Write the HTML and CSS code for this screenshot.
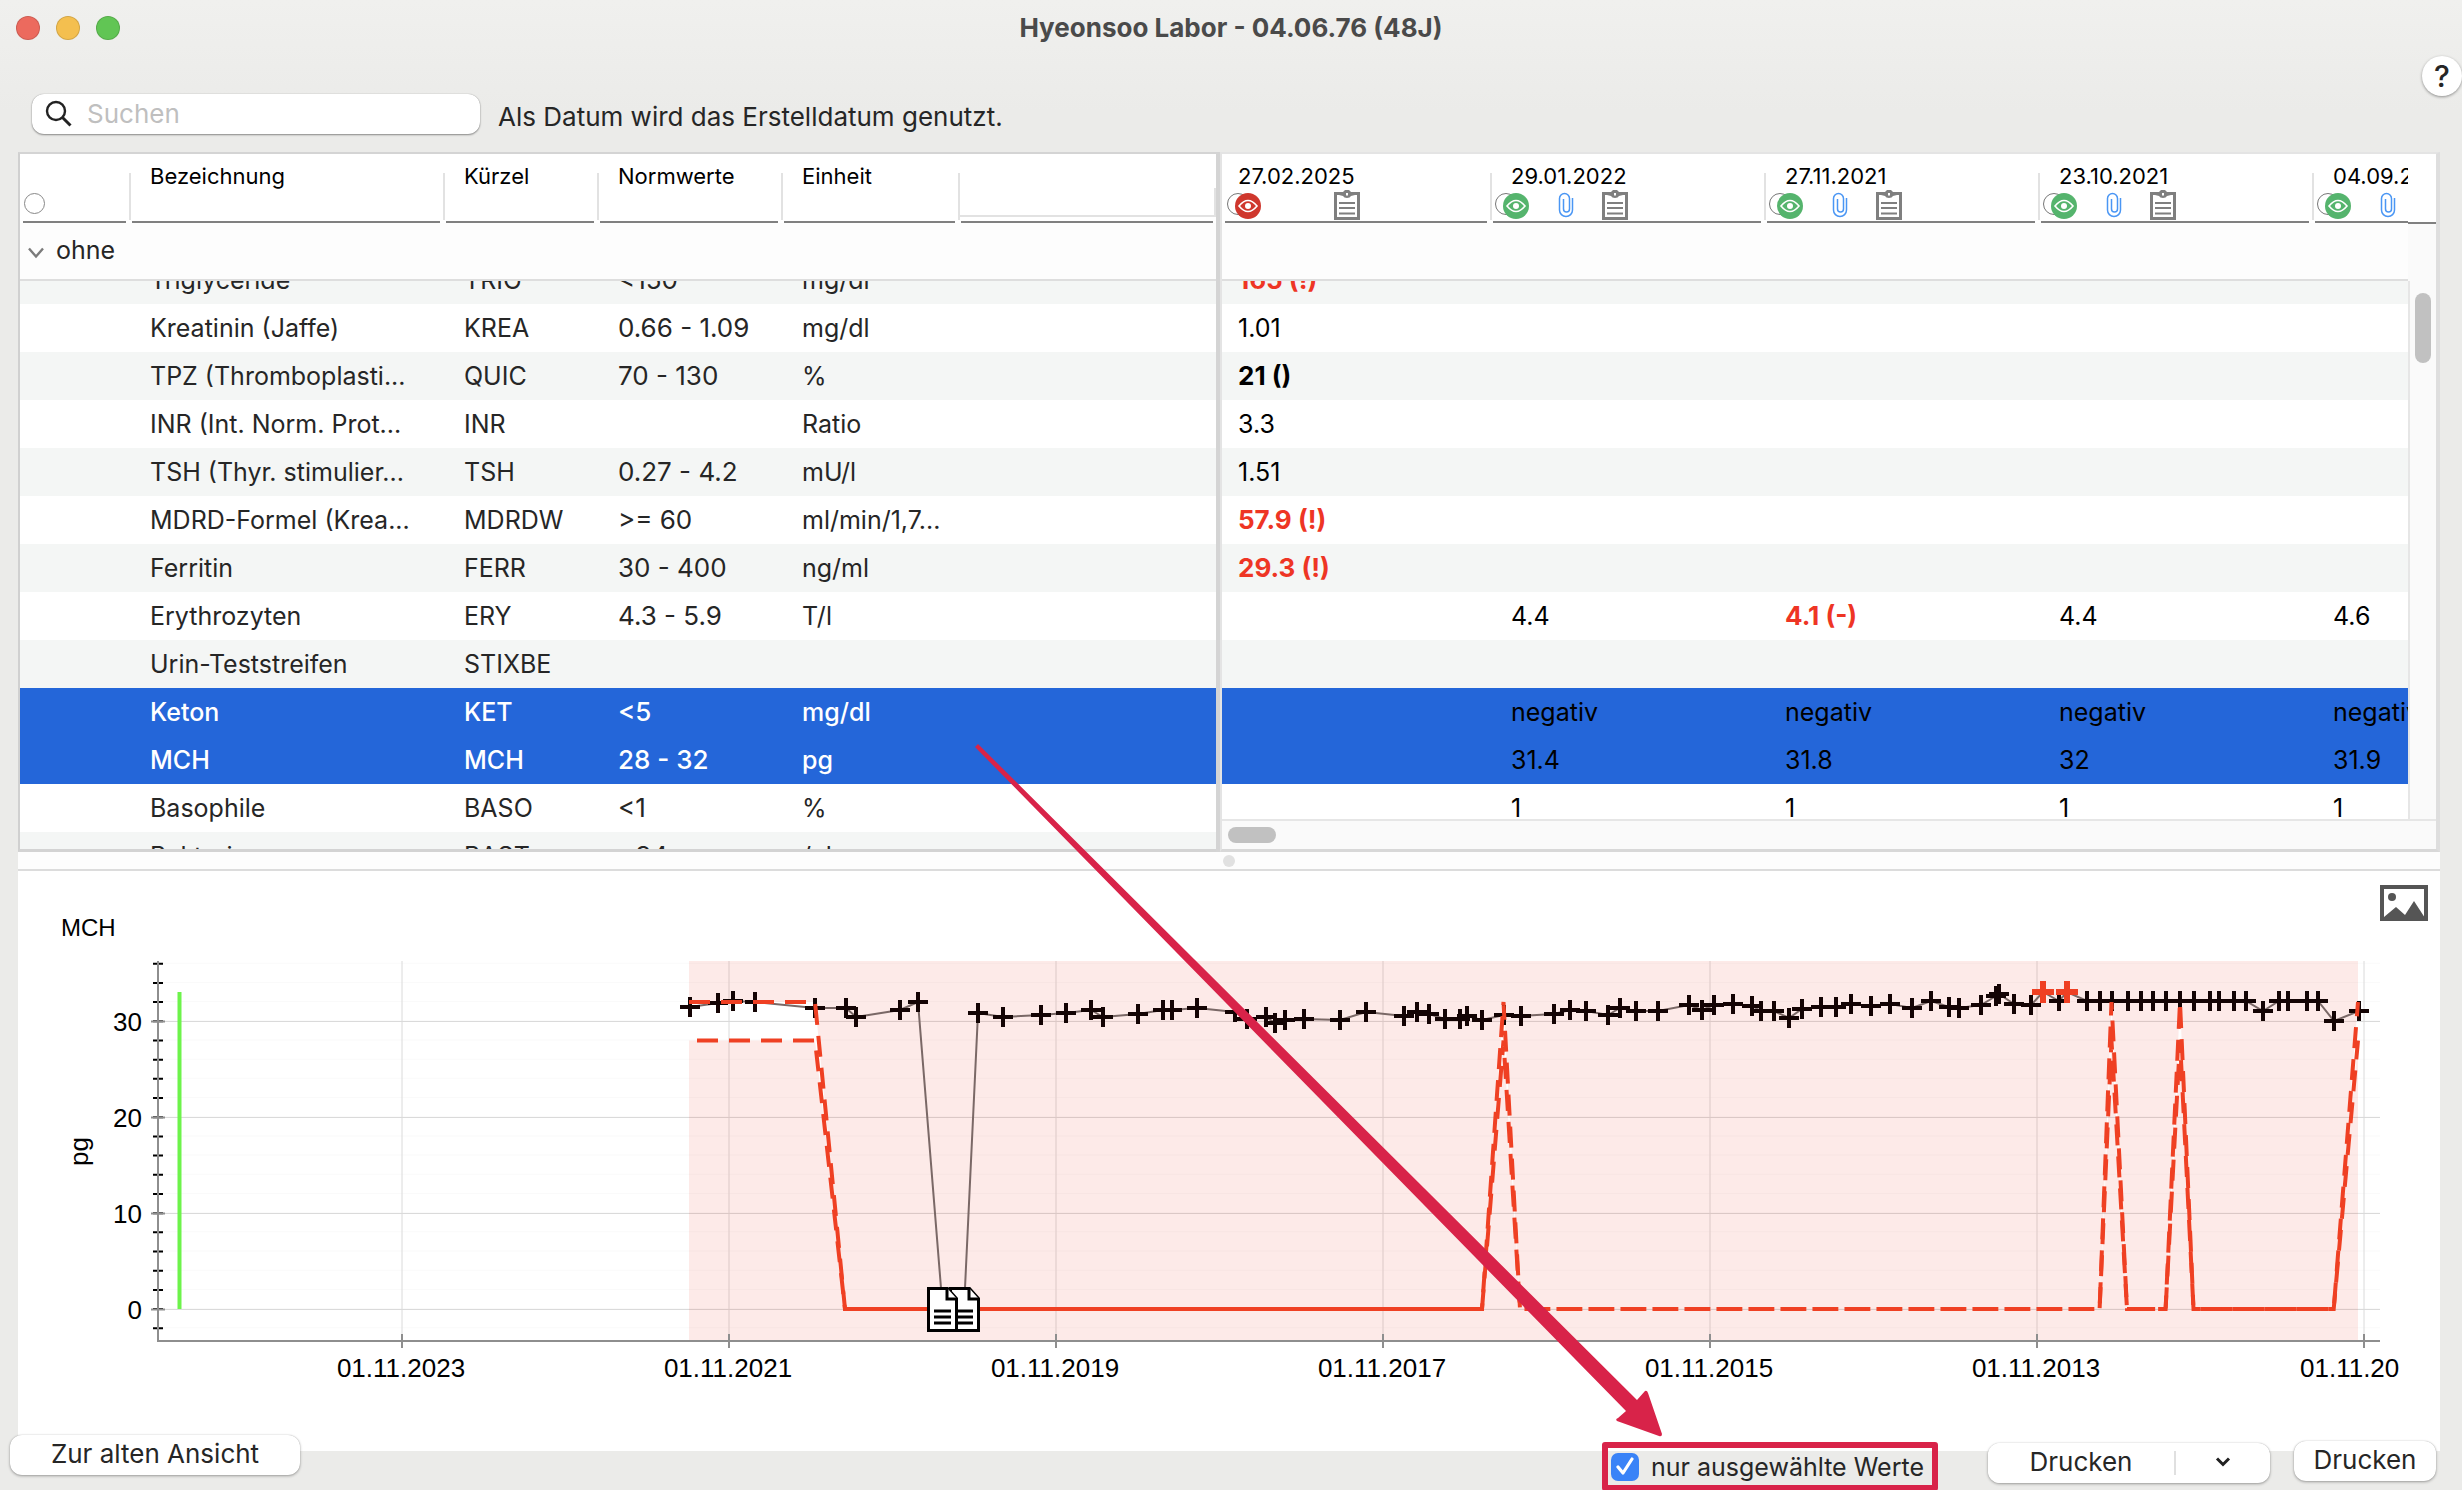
FILE: index.html
```html
<!DOCTYPE html>
<html lang="de">
<head>
<meta charset="utf-8">
<title>Hyeonsoo Labor - 04.06.76 (48J)</title>
<link rel="stylesheet" href="styles.css">
</head>
<body>
<svg class="defs" aria-hidden="true">
  <symbol id="eye" viewBox="0 0 38 30">
    <circle cx="14" cy="14" r="10.500" fill="#fff" stroke="#777" stroke-width="1"/>
    <circle cx="24" cy="16" r="13" fill="currentColor"/>
    <path d="M15 16q9-11 18 0q-9 11-18 0z" fill="none" stroke="#fff" stroke-width="1.600"/>
    <circle cx="24" cy="16" r="3" fill="#fff"/>
  </symbol>
  <symbol id="clip" viewBox="0 0 16 26">
    <path d="M14.500 6v12a6.500 6.500 0 0 1-13 0V6.500a5 5 0 0 1 10 0V17a3 3 0 0 1-6 0V7" fill="none" stroke="#4a96f4" stroke-width="1.500"/>
  </symbol>
  <symbol id="board" viewBox="0 0 26 30">
    <path d="M1.500 3.500h23v25h-23z" fill="#fff" stroke="#7f7f7f" stroke-width="3"/>
    <path d="M5 2h4l2-2h4l2 2h4v3l-4 1q-1 2-4 2t-4-2l-4-1z" fill="#7f7f7f"/>
    <path d="M5 13h16M5 18h16M5 23.500h16" stroke="#7f7f7f" stroke-width="1.800"/>
    <rect x="12" y="3" width="2" height="2.500" fill="#fff"/>
  </symbol>
</svg>

<header class="titlebar">
  <div class="lights"><span class="light close"></span><span class="light min"></span><span class="light max"></span></div>
  <h1>Hyeonsoo Labor - 04.06.76 (48J)</h1>
</header>

<div class="toolbar">
  <label class="search">
    <svg width="28" height="28" viewBox="0 0 28 28" aria-hidden="true"><circle cx="11" cy="11" r="9" fill="none" stroke="#222" stroke-width="2.400"/><path d="M17.500 17.500L25.500 25.500" stroke="#222" stroke-width="3"/></svg>
    <input type="search" placeholder="Suchen" aria-label="Suchen">
  </label>
  <p>Als Datum wird das Erstelldatum genutzt.</p>
  <button class="help" type="button" aria-label="Hilfe">?</button>
</div>

<main>
  <section class="panes">
    <div class="pane left">
      <table class="head cols-left">
        <colgroup><col class="c-sel"><col class="c-name"><col class="c-short"><col class="c-norm"><col class="c-unit"><col></colgroup>
        <thead>
          <tr><th><input class="pick" type="radio" aria-label="Alle wählen"></th><th>Bezeichnung</th><th>Kürzel</th><th>Normwerte</th><th>Einheit</th><th class="empty"><div></div></th></tr>
        </thead>
        <tbody><tr class="group"><td colspan="6"><svg width="16" height="12" viewBox="0 0 16 12" aria-hidden="true"><path d="M1 1.500L8 9.500L15 1.500" fill="none" stroke="#7b7b7b" stroke-width="2.400"/></svg>ohne</td></tr></tbody>
      </table>
      <div class="viewport">
        <table class="rows cols-left">
          <colgroup><col class="c-sel"><col class="c-name"><col class="c-short"><col class="c-norm"><col class="c-unit"><col></colgroup>
          <tbody>
            <tr><td></td><td>Triglyceride</td><td>TRIG</td><td>&lt;150</td><td>mg/dl</td><td></td></tr>
            <tr><td></td><td>Kreatinin (Jaffe)</td><td>KREA</td><td>0.66 - 1.09</td><td>mg/dl</td><td></td></tr>
            <tr><td></td><td>TPZ (Thromboplasti...</td><td>QUIC</td><td>70 - 130</td><td>%</td><td></td></tr>
            <tr><td></td><td>INR (Int. Norm. Prot...</td><td>INR</td><td></td><td>Ratio</td><td></td></tr>
            <tr><td></td><td>TSH (Thyr. stimulier...</td><td>TSH</td><td>0.27 - 4.2</td><td>mU/l</td><td></td></tr>
            <tr><td></td><td>MDRD-Formel (Krea...</td><td>MDRDW</td><td>&gt;= 60</td><td>ml/min/1,7...</td><td></td></tr>
            <tr><td></td><td>Ferritin</td><td>FERR</td><td>30 - 400</td><td>ng/ml</td><td></td></tr>
            <tr><td></td><td>Erythrozyten</td><td>ERY</td><td>4.3 - 5.9</td><td>T/l</td><td></td></tr>
            <tr><td></td><td>Urin-Teststreifen</td><td>STIXBE</td><td></td><td></td><td></td></tr>
            <tr class="sel"><td></td><td>Keton</td><td>KET</td><td>&lt;5</td><td>mg/dl</td><td></td></tr>
            <tr class="sel"><td></td><td>MCH</td><td>MCH</td><td>28 - 32</td><td>pg</td><td></td></tr>
            <tr><td></td><td>Basophile</td><td>BASO</td><td>&lt;1</td><td>%</td><td></td></tr>
            <tr><td></td><td>Bakterien</td><td>BAST</td><td>&lt;34</td><td>/µl</td><td></td></tr>
          </tbody>
        </table>
      </div>
    </div>

    <div class="pane right">
      <div class="head-clip">
        <table class="head cols-right">
          <colgroup><col class="c-first"><col><col><col><col></colgroup>
          <thead>
            <tr>
              <th>27.02.2025<span class="marks red"><svg class="i-eye"><use href="#eye"/></svg><svg class="i-clip"></svg><svg class="i-board"><use href="#board"/></svg></span></th>
              <th>29.01.2022<span class="marks"><svg class="i-eye"><use href="#eye"/></svg><svg class="i-clip"><use href="#clip"/></svg><svg class="i-board"><use href="#board"/></svg></span></th>
              <th>27.11.2021<span class="marks"><svg class="i-eye"><use href="#eye"/></svg><svg class="i-clip"><use href="#clip"/></svg><svg class="i-board"><use href="#board"/></svg></span></th>
              <th>23.10.2021<span class="marks"><svg class="i-eye"><use href="#eye"/></svg><svg class="i-clip"><use href="#clip"/></svg><svg class="i-board"><use href="#board"/></svg></span></th>
              <th>04.09.2021<span class="marks"><svg class="i-eye"><use href="#eye"/></svg><svg class="i-clip"><use href="#clip"/></svg></span></th>
            </tr>
          </thead>
          <tbody><tr class="group"><td colspan="5"></td></tr></tbody>
        </table>
      </div>
      <div class="corner"></div>
      <div class="viewport">
        <table class="rows cols-right">
          <colgroup><col class="c-first"><col><col><col><col></colgroup>
          <tbody>
            <tr><td class="bad">165 (!)</td><td></td><td></td><td></td><td></td></tr>
            <tr><td>1.01</td><td></td><td></td><td></td><td></td></tr>
            <tr><td class="strong">21 ()</td><td></td><td></td><td></td><td></td></tr>
            <tr><td>3.3</td><td></td><td></td><td></td><td></td></tr>
            <tr><td>1.51</td><td></td><td></td><td></td><td></td></tr>
            <tr><td class="bad">57.9 (!)</td><td></td><td></td><td></td><td></td></tr>
            <tr><td class="bad">29.3 (!)</td><td></td><td></td><td></td><td></td></tr>
            <tr><td></td><td>4.4</td><td class="bad">4.1 (-)</td><td>4.4</td><td>4.6</td></tr>
            <tr><td></td><td></td><td></td><td></td><td></td></tr>
            <tr class="sel"><td></td><td>negativ</td><td>negativ</td><td>negativ</td><td>negativ</td></tr>
            <tr class="sel"><td></td><td>31.4</td><td>31.8</td><td>32</td><td>31.9</td></tr>
            <tr><td></td><td>1</td><td>1</td><td>1</td><td>1</td></tr>
          </tbody>
        </table>
      </div>
      <div class="vbar"><span></span></div>
      <div class="hbar"><span></span></div>
    </div>
  </section>

  <div class="splitter"><span></span></div>

  <section class="chart">
    <svg viewBox="0 0 2422 580" role="img" aria-label="Verlauf MCH">
      <defs>
        <marker id="plus" markerUnits="userSpaceOnUse" markerWidth="20" markerHeight="20" refX="10" refY="10" viewBox="0 0 20 20"><path d="M10 0v20M0 10h20" stroke="#140404" stroke-width="4"/></marker>
        <marker id="plusred" markerUnits="userSpaceOnUse" markerWidth="22" markerHeight="22" refX="11" refY="11" viewBox="0 0 22 22"><path d="M11 0v22M0 11h22" stroke="#ef4023" stroke-width="6"/></marker>
        <g id="doc"><path d="M1.500 1.500h19l9 10v32h-28z" fill="#fff" stroke="#000" stroke-width="3"/><path d="M20 1v11h10" fill="#fff" stroke="#000" stroke-width="3"/><path d="M7 24h17M7 30h17M7 36h17" stroke="#000" stroke-width="3"/></g>
      </defs>
      <path class="grid-minor" d="M1251 91.700V470"/>
      <path class="grid" d="M384 90V470M711 90V470M1038 90V470M1365 90V470M1692 90V470M2019 90V470M2346 90V470M140 150.500H2362M140 246.500H2362M140 342.500H2362M140 438.500H2362"/>
      <path class="range" fill-rule="evenodd" d="M671 90H2340V470H671zM671 131H797L827 438H1464L1485.500 131L1502 438H2081.600L2093.500 131L2109 438H2147.600L2162 131L2175.500 438H2315.700L2340 131L2340 169.500L2315.700 438H2175.500L2162 169.500L2147.600 438H2109L2093.500 169.500L2081.600 438H1502L1485.500 169.500L1464 438H827L797 169.500H671z"/>
      <path class="ticks-minor" d="M140 91.700V470"/>
      <path class="axis" d="M140 90V470H2362M133 150.500h14M133 246.500h14M133 342.500h14M133 438.500h14M384 463v14M711 463v14M1038 463v14M1365 463v14M1692 463v14M2019 463v14M2346 463v14"/>
      <path class="now" d="M161.500 121V438"/>

      <path class="line" d="M900 131L923 417M947 417L960 142"/>
      <polyline class="line points" points="672,136 700,132 715,130 737,131 797,137 828,137 838,146 882,139 900,131"/>
      <polyline class="line points" points="960,142 985,146 1023,144 1048,142 1073,139 1085,146 1120,143 1145,139 1154,139 1179,137 1217,141 1229,148 1248,146 1257,152 1267,149 1286,148 1322,149 1348,141 1386,145 1399,141 1411,143 1427,148 1442,148 1449,145 1464,149 1486,144 1503,145 1536,143 1552,139 1568,140 1590,144 1602,137 1618,140 1640,140 1671,134 1684,139 1696,134 1715,133 1734,135 1743,140 1756,140 1771,147 1784,138 1803,136 1818,136 1833,133 1853,135 1872,133 1894,137 1913,130 1931,136 1941,137 1963,134 1978,125 1981,123 1996,133 2013,134 2025,121 2041,130 2049,121 2069,130 2082,130 2094,130 2110,130 2123,130 2135,130 2148,130 2162,130 2176,130 2192,130 2201,130 2216,130 2228,130 2245,140 2261,130 2270,130 2289,130 2300,130 2316,150 2341,140"/>
      <polyline class="points-red" points="2025,121 2049,121"/>

      <path class="limit" d="M671 131H797L827 438H1464L1485.500 131L1502 438H2081.600L2093.500 131L2109 438H2147.600L2162 131L2175.500 438H2315.700L2340 131"/>
      <path class="limit low" d="M671 169.500H797L827 438H1464L1485.500 169.500L1502 438H2081.600L2093.500 169.500L2109 438H2147.600L2162 169.500L2175.500 438H2315.700L2340 169.500"/>
      <use href="#doc" x="931" y="416"/>
      <use href="#doc" x="909" y="416"/>

      <text class="name" x="43" y="65">MCH</text>
      <g class="scale">
        <text x="124" y="160">30</text><text x="124" y="256">20</text><text x="124" y="352">10</text><text x="124" y="448">0</text>
      </g>
      <text class="unit" transform="translate(70 295) rotate(-90)">pg</text>
      <g class="dates">
        <text x="383" y="506">01.11.2023</text><text x="710" y="506">01.11.2021</text><text x="1037" y="506">01.11.2019</text><text x="1364" y="506">01.11.2017</text><text x="1691" y="506">01.11.2015</text><text x="2018" y="506">01.11.2013</text>
        <text class="edge" x="2282" y="506">01.11.20</text>
      </g>
    </svg>
    <button class="export" type="button" aria-label="Als Bild speichern"><svg width="48" height="36" viewBox="0 0 48 36"><path d="M2 2h44v32H2z" fill="#fff" stroke="#555" stroke-width="4"/><circle cx="12" cy="12" r="4" fill="#555"/><path d="M4 32L16 22l9 8l9-14l11 17v2H3z" fill="#555"/></svg></button>
  </section>
</main>

<footer>
  <button class="btn old" type="button">Zur alten Ansicht</button>
  <label class="only"><input type="checkbox" checked><svg class="tick" width="18" height="18" viewBox="0 0 18 18" aria-hidden="true"><path d="M2 10l5 6L16 2" fill="none" stroke="#fff" stroke-width="3.200" stroke-linecap="round" stroke-linejoin="round"/></svg>nur ausgewählte Werte</label>
  <div class="split">
    <button type="button">Drucken</button>
    <button class="more" type="button" aria-label="Weitere Druckoptionen"><svg width="16" height="12" viewBox="0 0 16 12"><path d="M2 2.500l6 6l6-6" fill="none" stroke="#222" stroke-width="3"/></svg></button>
  </div>
  <button class="btn print" type="button">Drucken</button>
</footer>

<svg class="arrow" viewBox="0 0 2462 1490" aria-hidden="true"><path d="M975 747L978 744L1637 1400L1645 1391Q1647 1390 1648 1393L1662 1434Q1662 1437 1659 1436L1617 1421Q1615 1419 1618 1418L1626 1411z" fill="#d82349"/></svg>
</body>
</html>
```
FILE: styles.css
```css
* { box-sizing: border-box; }

body {
  margin: 0;
  min-height: 100vh;
  display: flex;
  flex-direction: column;
  position: relative;
  overflow-x: hidden;
  background: linear-gradient(#f0f0ee, #ebebe9 110px);
  color: #262626;
  font: 26px/32px Inter, "Liberation Sans", sans-serif;
}

button, input { font: inherit; color: inherit; }
button { border: 0; background: #fff; padding: 0; }
.defs { position: absolute; width: 0; height: 0; }

.titlebar {
  display: grid;
  grid-template-columns: 1fr auto 1fr;
  align-items: center;
  height: 56px;
}
.titlebar h1 { margin: 0; font-size: 26px; font-weight: 700; color: #4a4a4a; }
.lights { display: flex; gap: 16px; padding-left: 16px; }
.light { width: 24px; height: 24px; border-radius: 50%; border: 1px solid #0002; }
.close { background: #ec6a5e; }
.min { background: #f4bf4f; }
.max { background: #61c554; }

.toolbar {
  display: flex;
  align-items: flex-start;
  height: 96px;
  padding-left: 32px;
}
.toolbar p { margin: 45px 0 0 18px; }
.search {
  display: flex;
  align-items: center;
  gap: 14px;
  width: 448px;
  height: 40px;
  margin-top: 38px;
  padding-left: 13px;
  border-radius: 12px;
  background: #fff;
  box-shadow: 0 0 1px #0005, 0 1px 2px #0006;
}
.search input { flex: 1; min-width: 0; border: 0; outline: 0; padding: 0; background: none; }
.search input::placeholder { color: #bfbfbf; opacity: 1; }
.help {
  width: 40px;
  height: 40px;
  margin-left: auto;
  border-radius: 50%;
  font-size: 30px;
  font-weight: 500;
  box-shadow: 0 1px 3px #0006;
}

main { flex: 1; display: flex; flex-direction: column; margin: 0 22px 0 18px; }

.panes { display: grid; grid-template-columns: minmax(0, 1198fr) 4px minmax(0, 1220fr); }
.panes::before { content: ""; grid-area: 1 / 2; background: #d4d4d4; }
.pane { background: #fff; border-top: 2px solid #d4d4d4; }
.left { grid-area: 1 / 1; border-left: 2px solid #d0d0d0; border-bottom: 3px solid #d3d3d3; }
.right {
  grid-area: 1 / 3;
  display: grid;
  grid-template: auto 1fr 30px / minmax(0, 1fr) 28px;
  border-top-color: #e4e4e4;
  border-left: 2px solid #e4e4e4;
  border-right: 4px solid #dedede;
  border-bottom: 3px solid #d8d8d8;
}

table { border-collapse: collapse; table-layout: fixed; }
.cols-left { width: 100%; }
.cols-right { width: 1364px; }
.c-sel { width: 109px; }
.c-name { width: 314px; }
.c-short { width: 154px; }
.c-norm { width: 184px; }
.c-unit { width: 177px; }
.c-first { width: 268px; }

.head th {
  height: 69px;
  padding: 8px 0 0 21px;
  vertical-align: top;
  text-align: left;
  font-size: 22px;
  font-weight: 400;
  line-height: 28px;
  color: #000;
  background:
    linear-gradient(90deg, transparent 3px, #808080 3px, #808080 calc(100% - 3px), transparent calc(100% - 3px)) 0 100% / 100% 2px no-repeat,
    linear-gradient(#e2e2e2, #e2e2e2) 0 19px / 2px 47px no-repeat;
}
.head th:first-child { background-size: 100% 2px, 0 0; }
.cols-left th:first-child { padding: 39px 0 0 4px; }
.cols-right th:first-child, .cols-right td:first-child { padding-left: 16px; }
.head .empty { padding: 34px 0 0 2px; }
.empty div { height: 29px; border: solid #e2e2e2; border-width: 0 2px 2px 0; }
.pick {
  display: block;
  appearance: none;
  width: 21px;
  height: 21px;
  margin: 0;
  border: 1px solid #888;
  border-radius: 50%;
}
.group td {
  height: 57px;
  padding: 0 0 3px 8px;
  border-bottom: 2px solid #dedede;
  background: #fdfdfd;
  font-size: 25px;
}
.group svg { margin-right: 12px; }

.marks { display: flex; margin-left: -21px; color: #55b46d; }
.cols-right th:first-child .marks { margin-left: -16px; }
.marks svg { display: block; height: 30px; }
.marks.red { color: #cf372d; }
.i-eye { width: 38px; margin-left: 2px; }
.marks .i-clip { width: 16px; height: 26px; margin: 2px 28px 0 28px; }
.i-board { width: 26px; }
.head-clip { overflow: hidden; }
.corner {
  border-bottom: 57px solid #fafafa;
  background: linear-gradient(#808080, #808080) 0 100% / 100% 2px no-repeat #fff;
}

.viewport { overflow: hidden; min-width: 0; }
.left .viewport { height: 568px; }
.right .viewport { height: 538px; }
.rows { margin-top: -25px; }
.rows tr { height: 48px; background: #fff; }
.rows tr:nth-child(odd) { background: #f4f6f5; }
.rows td { padding: 0 0 0 21px; font-size: 25px; white-space: nowrap; }
.cols-left td:nth-child(4) { font-size: 26px; }
.cols-right td { color: #000; }
.rows tr.sel { background: #2466d9; }
.left .sel td { color: #fff; font-weight: 500; }
.rows .strong, .rows .bad { font-size: 26px; font-weight: 700; }
.rows .bad { color: #ee3524; }

.vbar { border-left: 2px solid #e6e6e6; background: #fafafa; padding: 12px 5px; }
.vbar span { display: block; width: 16px; height: 70px; border-radius: 8px; background: #c1c1c1; }
.hbar { grid-column: 1 / 3; border-top: 2px solid #e6e6e6; background: #fafafa; padding: 6px; }
.hbar span { display: block; width: 48px; height: 16px; border-radius: 8px; background: #c1c1c1; }

.splitter {
  display: flex;
  align-items: center;
  justify-content: center;
  height: 19px;
  border-bottom: 2px solid #dcdcdc;
  background: #fdfdfd;
}
.splitter span { width: 12px; height: 12px; border-radius: 50%; background: #e1e1e1; }

.chart { flex: 1; position: relative; background: #fff; }
.chart > svg { display: block; width: 100%; height: auto; font-family: "Liberation Sans", Arial, sans-serif; }
.export { position: absolute; top: 14px; right: 12px; line-height: 0; }
.grid { stroke: #dadada; stroke-width: 1; fill: none; }
.grid-minor { stroke: #fafafa; stroke-width: 2222; stroke-dasharray: 1 18.190; }
.range { fill: #f0341a; fill-opacity: .1; }
.axis { stroke: #8e8e8e; stroke-width: 2; fill: none; }
.ticks-minor { stroke: #000; stroke-width: 10; stroke-dasharray: 2 17.190; }
.now { stroke: #6df34b; stroke-width: 4; }
.line { fill: none; stroke: #7a6866; stroke-width: 2; }
.points { marker: url(#plus); }
.points-red { fill: none; marker: url(#plusred); }
.limit { fill: none; stroke: #ef4023; stroke-width: 4; stroke-dasharray: 21 11; }
.low { stroke-dashoffset: -8; }
.chart text { fill: #000; font-size: 26px; }
.chart .name { font-size: 24px; }
.scale { text-anchor: end; }
.dates { text-anchor: middle; }
.dates .edge { text-anchor: start; }

footer {
  position: relative;
  display: flex;
  align-items: flex-start;
  height: 56px;
  margin-top: -16px;
  padding: 0 26px 0 10px;
}
.btn, .split {
  height: 40px;
  border-radius: 12px;
  background: #fff;
  box-shadow: 0 0 1px #0004, 0 1px 3px #0005;
}
.btn, .split button { padding-bottom: 2px; }
.old { width: 290px; }
.only {
  display: flex;
  align-items: center;
  position: relative;
  width: 336px;
  height: 49px;
  margin: 7px 0 0 auto;
  border: 6px solid #d82349;
  border-radius: 3px;
  padding-left: 3px;
  font-size: 25px;
}
.only input { appearance: none; width: 28px; height: 28px; margin: 0 12px 0 0; border-radius: 7px; background: #3a83f7; }
.tick { position: absolute; left: 8px; top: 9px; }
.split { display: flex; width: 282px; margin: 8px 24px 0 50px; }
.split button { flex: 1; border-radius: 12px; }
.split .more {
  flex: 0 0 96px;
  display: grid;
  place-items: center;
  height: 24px;
  margin: 8px 0;
  border-left: 2px solid #e0e0e0;
  border-radius: 0;
  background: none;
}
.print { width: 142px; margin-top: 6px; }

.arrow { position: absolute; left: 0; top: 0; width: 100%; pointer-events: none; }
```
